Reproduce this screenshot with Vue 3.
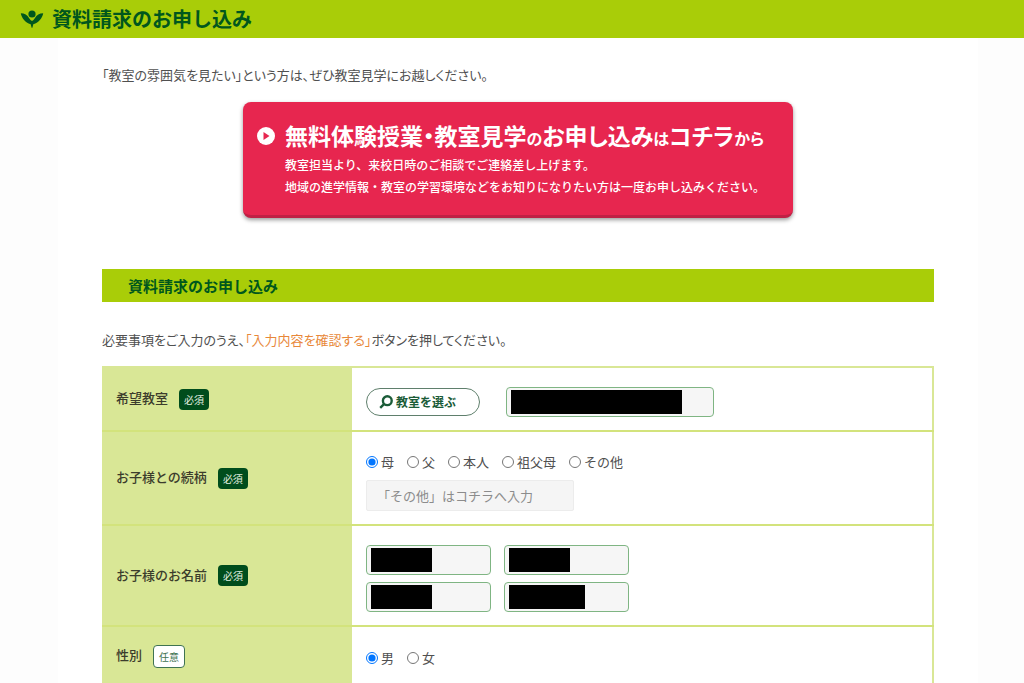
<script setup>
import { ref } from 'vue'

const relations = ['母', '父', '本人', '祖父母', 'その他']
const genders = ['男', '女']
const relation = ref('母')
const gender = ref('男')

const nameFields = [
  { label: '姓', mask: 61 },
  { label: '名', mask: 61 },
  { label: 'セイ', mask: 61 },
  { label: 'メイ', mask: 76 },
]
</script>

<template>
  <div class="page">
    <header class="bar">
      <svg class="logo" viewBox="0 0 24 18" aria-hidden="true">
        <circle cx="12" cy="4" r="3.6" />
        <path d="M0.800 3.200 C4.500 3.200 7.500 5 9 8 C10 9.500 11 10.500 12 11 C13 10.500 14 9.500 15 8 C16.500 5 19.500 3.200 23.200 3.200 C22.500 7.500 19 12.800 13.300 14.200 L12.400 17.800 L11.600 17.800 L10.700 14.200 C5 12.800 1.500 7.500 0.800 3.200 Z" />
      </svg>
      <h1>資料請求のお申し込み</h1>
    </header>

    <main class="panel">
      <p class="intro">「教室の雰囲気を見たい」という方は、ぜひ教室見学にお越しください。</p>

      <a class="banner" href="#trial">
        <svg class="play" viewBox="0 0 18 18" aria-hidden="true">
          <circle cx="9" cy="9" r="9" />
          <path d="M6.500 5 L12.500 9 L6.500 13 Z" />
        </svg>
        <span class="banner-body">
          <strong>無料体験授業・教室見学<small>の</small>お申し込み<small>は</small>コチラ<small>から</small></strong>
          <span>教室担当より、来校日時のご相談でご連絡差し上げます。</span>
          <span>地域の進学情報・教室の学習環境などをお知りになりたい方は一度お申し込みください。</span>
        </span>
      </a>

      <h2>資料請求のお申し込み</h2>
      <p class="lead">必要事項をご入力のうえ、<em>「入力内容を確認する」</em>ボタンを押してください。</p>

      <form @submit.prevent>
        <table>
          <tbody>
            <tr class="row-school">
              <th scope="row"><label for="school">希望教室</label><span class="tag">必須</span></th>
              <td>
                <div class="school">
                  <button type="button" class="pick">
                    <svg viewBox="0 0 14 14" aria-hidden="true">
                      <circle cx="8.300" cy="5.700" r="4.400" />
                      <path d="M5.200 8.800 L1.200 12.800" />
                    </svg>
                    教室を選ぶ
                  </button>
                  <span class="field wide">
                    <input id="school" type="text" />
                    <span class="mask" :style="{ width: '171px' }"></span>
                  </span>
                </div>
              </td>
            </tr>
            <tr class="row-relation">
              <th scope="row">お子様との続柄<span class="tag">必須</span></th>
              <td>
                <div class="radios">
                  <label v-for="r in relations" :key="r">
                    <input v-model="relation" type="radio" name="relation" :value="r" />{{ r }}
                  </label>
                </div>
                <input class="other" type="text" placeholder="「その他」はコチラへ入力" aria-label="その他" disabled />
              </td>
            </tr>
            <tr class="row-name">
              <th scope="row">お子様のお名前<span class="tag">必須</span></th>
              <td>
                <div class="names">
                  <span v-for="f in nameFields" :key="f.label" class="field">
                    <input type="text" :aria-label="f.label" />
                    <span class="mask" :style="{ width: f.mask + 'px' }"></span>
                  </span>
                </div>
              </td>
            </tr>
            <tr class="row-gender">
              <th scope="row">性別<span class="tag optional">任意</span></th>
              <td>
                <div class="radios">
                  <label v-for="g in genders" :key="g">
                    <input v-model="gender" type="radio" name="gender" :value="g" />{{ g }}
                  </label>
                </div>
              </td>
            </tr>
          </tbody>
        </table>
      </form>
    </main>
  </div>
</template>

<style>
body {
  margin: 0;
  background: #fdfdfd;
}
</style>

<style scoped>
.page {
  font-family: "Noto Sans CJK JP", sans-serif;
  font-size: 13px;
  line-height: 20px;
  color: #505050;
}
.page * {
  box-sizing: border-box;
}
.bar {
  display: flex;
  align-items: center;
  gap: 8px;
  height: 38px;
  padding: 0 20px;
  background: #a9cd08;
  color: #00571d;
}
.logo {
  width: 24px;
  height: 18px;
  fill: #00571d;
}
h1 {
  margin: 0;
  font-size: 20px;
  line-height: 36px;
  font-weight: 700;
}
.panel {
  margin: 0 46px 0 58px;
  padding: 27px 44px 0;
  background: #fff;
}
.intro,
.lead {
  margin: 0;
  font-feature-settings: "palt";
}
.banner {
  display: flex;
  gap: 10px;
  width: 550px;
  margin: 17px auto 51px;
  padding: 18px 14px 17px;
  border-radius: 8px;
  border-bottom: 3px solid #c02045;
  background: #e7264f;
  box-shadow: 0 2px 4px rgba(0, 0, 0, 0.4);
  color: #fff;
  text-decoration: none;
}
.play {
  flex: none;
  width: 18px;
  height: 18px;
  margin-top: 7px;
  fill: #fff;
}
.play path {
  fill: #e7264f;
}
.banner-body {
  display: flex;
  flex-direction: column;
  font-size: 12px;
  line-height: 22px;
  white-space: nowrap;
  font-weight: 500;
}
.banner strong {
  font-size: 23px;
  line-height: 30px;
  margin-bottom: 1px;
  font-weight: 700;
  font-feature-settings: "palt";
}
.banner small {
  font-size: 16px;
}
h2 {
  margin: 0;
  padding: 0 26px;
  background: #a9cd08;
  color: #00571d;
  font-size: 15px;
  line-height: 33px;
  font-weight: 700;
}
.lead {
  margin: 28px 0 16px;
}
.lead em {
  font-style: normal;
  color: #e8883a;
}
table {
  width: 100%;
  border-collapse: collapse;
  border: 2px solid #d9e796;
}
th,
td {
  text-align: left;
  vertical-align: middle;
  border-bottom: 2px solid #d3e37c;
}
th {
  width: 30%;
  padding: 0 12px;
  background: #d9e796;
  color: #3c3c2c;
  font-weight: 500;
}
td {
  padding: 0 14px;
}
.row-school {
  height: 64px;
}
.row-relation {
  height: 94px;
}
.row-name {
  height: 101px;
}
.row-gender {
  height: 60px;
}
.tag {
  display: inline-block;
  margin-left: 11px;
  padding: 0 5px;
  border-radius: 4px;
  background: #004d1c;
  color: #e2f0e0;
  font-size: 10px;
  line-height: 21px;
  font-weight: 400;
  vertical-align: middle;
}
.tag.optional {
  border: 1px solid #3f7352;
  background: #fff;
  color: #3f7352;
}
.school {
  display: flex;
  gap: 26px;
  align-items: center;
  padding-top: 5px;
}
.pick {
  display: flex;
  align-items: center;
  gap: 3px;
  width: 114px;
  height: 28px;
  padding: 0 12px;
  border: 1px solid #5f7f6c;
  border-radius: 14px;
  background: #fff;
  color: #1b5c38;
  font-family: inherit;
  font-size: 12px;
  font-weight: 700;
  white-space: nowrap;
}
.pick svg {
  flex: none;
  width: 14px;
  height: 14px;
  fill: none;
  stroke: #1b5c38;
  stroke-width: 2.4;
}
.field {
  position: relative;
  display: block;
  width: 125px;
  height: 30px;
}
.field.wide {
  width: 208px;
}
.field input {
  display: block;
  width: 100%;
  height: 100%;
  padding: 0 8px;
  border: 1px solid #7fb583;
  border-radius: 4px;
  background: #f6f6f6;
  font-family: inherit;
  font-size: 13px;
}
.mask {
  position: absolute;
  top: 3px;
  left: 5px;
  height: 24px;
  background: #000;
}
.radios {
  display: flex;
  gap: 13px;
  padding-top: 6px;
}
.radios label {
  display: flex;
  align-items: center;
  gap: 3px;
}
.radios input {
  width: 12px;
  height: 12px;
  margin: 0;
}
.row-gender .radios {
  padding-top: 4px;
}
.other {
  display: block;
  width: 208px;
  height: 31px;
  margin-top: 8px;
  padding: 0 10px;
  border: 1px solid #ececec;
  border-radius: 2px;
  background: #f5f5f5;
  font-family: inherit;
  font-size: 13px;
}
.other::placeholder {
  color: #8c8c8c;
}
.names {
  display: grid;
  grid-template-columns: 125px 125px;
  gap: 7px 13px;
  padding-top: 5px;
}
</style>
